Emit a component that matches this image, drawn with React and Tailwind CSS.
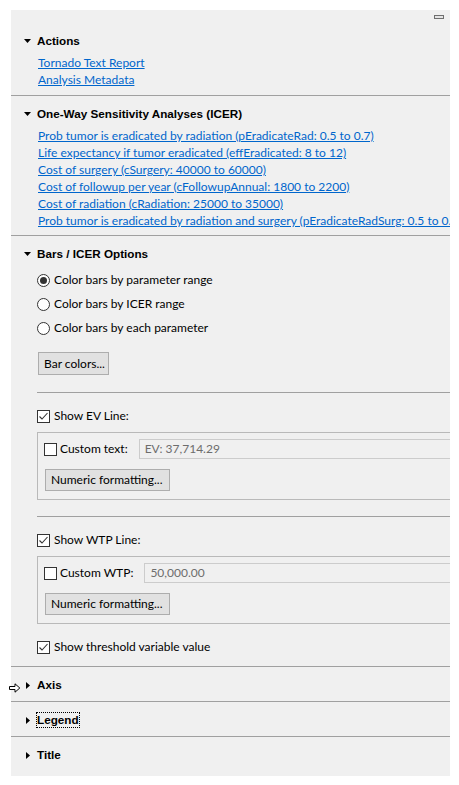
import React from "react";

const links = [
  "Prob tumor is eradicated by radiation (pEradicateRad: 0.5 to 0.7)",
  "Life expectancy if tumor eradicated (effEradicated: 8 to 12)",
  "Cost of surgery (cSurgery: 40000 to 60000)",
  "Cost of followup per year (cFollowupAnnual: 1800 to 2200)",
  "Cost of radiation (cRadiation: 25000 to 35000)",
  "Prob tumor is eradicated by radiation and surgery (pEradicateRadSurg: 0.5 to 0.7)",
];

function Header({ open, children }) {
  return (
    <div className="flex items-center h-[14px] pl-[13px] font-['Liberation_Sans',sans-serif] font-bold text-[11.7px] leading-[14px] text-black">
      <span className="w-[13px] flex items-center">
        {open ? (
          <svg width="7" height="4" viewBox="0 0 7 4">
            <polygon points="0,0 7,0 3.5,4" fill="#000" />
          </svg>
        ) : (
          <svg width="4" height="7" viewBox="0 0 4 7" className="ml-[2px]">
            <polygon points="0,0 4,3.5 0,7" fill="#000" />
          </svg>
        )}
      </span>
      {children}
    </div>
  );
}

function Check({ checked }) {
  return (
    <span className="w-[13px] h-[13px] border border-[#333] bg-white flex items-center justify-center shrink-0">
      {checked && (
        <svg width="11" height="11" viewBox="0 0 11 11">
          <polyline points="1.5,5.5 4,8 9.5,2" fill="none" stroke="#333" strokeWidth="1.1" />
        </svg>
      )}
    </span>
  );
}

function Radio({ checked, label }) {
  return (
    <div className="h-[24px] flex items-center gap-[4px]">
      <span className="w-[13px] h-[13px] rounded-full border border-[#333] bg-white flex items-center justify-center shrink-0">
        {checked && <span className="w-[7px] h-[7px] rounded-full bg-[#333]" />}
      </span>
      <span>{label}</span>
    </div>
  );
}

function CheckRow({ checked, label }) {
  return (
    <div className="h-[24px] flex items-center gap-[4px]">
      <Check checked={checked} />
      <span>{label}</span>
    </div>
  );
}

function GroupBox({ label, value }) {
  return (
    <div className="mt-[4px] -mr-[12px] border border-[#b9b9b9] pt-[6px] pb-[8px] pl-[6px]">
      <div className="h-[20px] flex items-center">
        <Check />
        <span className="ml-[3px]">{label}</span>
        <div className="ml-[11px] flex-1 h-[20px] border border-[#cccccc] bg-[#f0f0f0] text-[#6d6d6d] pl-[5px] flex items-center">
          {value}
        </div>
      </div>
      <button className="mt-[10px] ml-[1px] w-[125px] h-[22px] bg-[#e1e1e1] border border-[#adadad] text-left pl-[5px] text-black">
        Numeric formatting...
      </button>
    </div>
  );
}

export default function App() {
  return (
    <div className="relative w-[459px] h-[785px] bg-white font-['Lato',sans-serif] text-[12px] text-black">
      <div className="absolute top-0 left-0 pt-[10px] pl-[11px]">
        <div className="relative w-[439px] h-[766px] bg-[#f0f0f0] overflow-hidden">
          <span className="absolute left-[423px] top-[5px] w-[10px] h-[4px] border border-[#6f6f6f] bg-[#e4e4e4]" />

          <div className="pt-[24px] pb-[7px] border-b border-[#a0a0a0]">
            <Header open>Actions</Header>
            <div className="mt-[6px] pl-[27px] text-[#0066cc] leading-[17px]">
              <div className="underline">Tornado Text Report</div>
              <div className="underline">Analysis Metadata</div>
            </div>
          </div>

          <div className="pt-[11px] pb-[6px] border-b border-[#a0a0a0]">
            <Header open>One-Way Sensitivity Analyses (ICER)</Header>
            <div className="mt-[6px] pl-[27px] text-[#0066cc] leading-[17px] whitespace-nowrap">
              {links.map((l) => (
                <div key={l} className="underline">{l}</div>
              ))}
            </div>
          </div>

          <div className="pt-[11px] pb-[7px] border-b border-[#a0a0a0]">
            <Header open>Bars / ICER Options</Header>
            <div className="mt-[7px] pl-[26px]">
              <Radio checked label="Color bars by parameter range" />
              <Radio label="Color bars by ICER range" />
              <Radio label="Color bars by each parameter" />
              <button className="mt-[12px] ml-[1px] w-[71px] h-[23px] bg-[#e1e1e1] border border-[#adadad] text-left pl-[5px] block">
                Bar colors...
              </button>
              <div className="mt-[17px] h-px bg-[#a0a0a0]" />
              <div className="mt-[11px]">
                <CheckRow checked label="Show EV Line:" />
              </div>
              <GroupBox label="Custom text:" value="EV: 37,714.29" />
              <div className="mt-[16px] h-px bg-[#a0a0a0]" />
              <div className="mt-[11px]">
                <CheckRow checked label="Show WTP Line:" />
              </div>
              <GroupBox label="Custom WTP:" value="50,000.00" />
              <div className="mt-[11px]">
                <CheckRow checked label="Show threshold variable value" />
              </div>
            </div>
          </div>

          <div className="pt-[11px] pb-[9px] border-b border-[#a0a0a0]">
            <Header>Axis</Header>
          </div>
          <div className="pt-[11px] pb-[9px] border-b border-[#a0a0a0]">
            <Header>
              <span className="relative">
                Legend
                <span className="absolute -left-px -right-px top-[-1px] bottom-[-1px] border border-dotted border-black" />
              </span>
            </Header>
          </div>
          <div className="pt-[11px]">
            <Header>Title</Header>
          </div>
        </div>
      </div>

      <svg className="absolute left-[9px] top-[683px]" width="12" height="10" viewBox="0 0 12 10">
        <path d="M0.5,3.5 H6 V0.8 L10.8,5 L6,9.2 V6.5 H0.5 Z" fill="#fff" stroke="#000" strokeWidth="1" />
      </svg>
    </div>
  );
}
